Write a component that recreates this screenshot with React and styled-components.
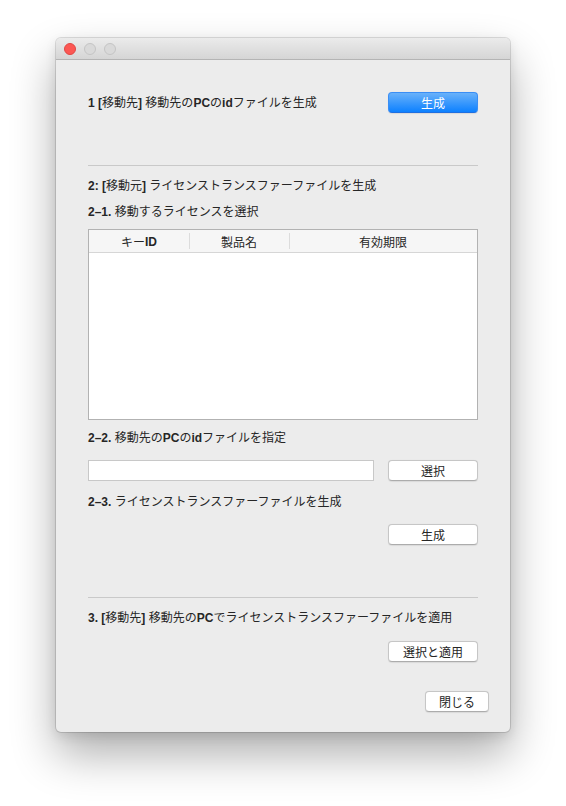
import styled, { createGlobalStyle } from "styled-components";

const Global = createGlobalStyle`
    html, body {
        margin: 0;
        background: #ffffff;
    }
    body {
        font-family: "Liberation Sans", "Noto Sans CJK JP", sans-serif;
        font-size: 12px;
        color: #262626;
    }
`;

const Page = styled.div`
    padding: 38px 0 0 56px;
    height: 768px;
`;

const Window = styled.div`
    width: 454px;
    height: 694px;
    box-sizing: border-box;
    background: #ececec;
    border-radius: 5px;
    display: flex;
    flex-direction: column;
    box-shadow: 0 0 0 1px rgba(0, 0, 0, 0.12), 0 22px 45px rgba(0, 0, 0, 0.32), 0 4px 12px rgba(0, 0, 0, 0.1);
    overflow: hidden;
`;

const TitleBar = styled.div`
    height: 21px;
    flex-shrink: 0;
    background: linear-gradient(#ebebeb, #d5d5d5);
    border-bottom: 1px solid #b4b4b4;
    display: flex;
    align-items: center;
    gap: 8px;
    padding-left: 8px;
`;

const Light = styled.span`
    width: 12px;
    height: 12px;
    box-sizing: border-box;
    border-radius: 50%;
    background: ${props => props.$red ? "#fc5753" : "#d9d9d9"};
    border: 1px solid ${props => props.$red ? "#df4744" : "#c4c4c4"};
`;

const Body = styled.div`
    flex: 1;
    display: flex;
    flex-direction: column;
    padding: 32px 32px 0 32px;
`;

const Row = styled.div`
    display: flex;
    align-items: center;
    justify-content: space-between;
    margin-top: ${props => props.$top || 0}px;
`;

const EndRow = styled.div`
    display: flex;
    justify-content: flex-end;
    margin-top: ${props => props.$top || 0}px;
    margin-right: ${props => props.$right || 0}px;
`;

const Label = styled.div`
    line-height: 16px;
    white-space: nowrap;
    margin-top: ${props => props.$top || 0}px;

    b {
        font-weight: bold;
    }
`;

const Divider = styled.div`
    height: 1px;
    background: #c9c9c9;
    margin-top: ${props => props.$top || 0}px;
`;

const PushButton = styled.button`
    width: ${props => props.$width || 90}px;
    height: 21px;
    box-sizing: border-box;
    padding: 0;
    font-family: inherit;
    font-size: 12px;
    border-radius: 4px;
    color: ${props => props.$primary ? "#ffffff" : "#262626"};
    background: ${props => props.$primary ? "linear-gradient(#69b1fa, #0d81ff)" : "#ffffff"};
    border: 1px solid ${props => props.$primary ? "#3a8ef5" : "#c6c6c6"};
    border-bottom-color: ${props => props.$primary ? "#1f6fe0" : "#acacac"};
    box-shadow: 0 0.5px 1px rgba(0, 0, 0, 0.08);
`;

const Table = styled.div`
    margin-top: 9px;
    height: 191px;
    box-sizing: border-box;
    border: 1px solid #b2b2b2;
    background: #ffffff;
    display: flex;
    flex-direction: column;
`;

const HeaderRow = styled.div`
    height: 22px;
    flex-shrink: 0;
    display: grid;
    grid-template-columns: 100px 100px 1fr;
    background: #f6f6f6;
    border-bottom: 1px solid #d6d6d6;
`;

const HeaderCell = styled.div`
    display: flex;
    align-items: center;
    justify-content: center;
    position: relative;
    padding-top: 1px;

    & + &::before {
        content: "";
        position: absolute;
        left: 0;
        top: 3px;
        bottom: 3px;
        width: 1px;
        background: #dcdcdc;
    }
`;

const FileInput = styled.div`
    width: 286px;
    height: 21px;
    box-sizing: border-box;
    background: #ffffff;
    border: 1px solid #c8c8c8;
`;

const App = () => {
    return (
        <>
            <Global />
            <Page>
                <Window>
                    <TitleBar>
                        <Light $red />
                        <Light />
                        <Light />
                    </TitleBar>
                    <Body>
                        <Row>
                            <Label><b>1 [</b>移動先<b>]</b> 移動先の<b>PC</b>の<b>id</b>ファイルを生成</Label>
                            <PushButton $primary>生成</PushButton>
                        </Row>
                        <Divider $top={52} />
                        <Label $top={12}><b>2: [</b>移動元<b>]</b> ライセンストランスファーファイルを生成</Label>
                        <Label $top={10}><b>2–1.</b> 移動するライセンスを選択</Label>
                        <Table>
                            <HeaderRow>
                                <HeaderCell>キー<b>ID</b></HeaderCell>
                                <HeaderCell>製品名</HeaderCell>
                                <HeaderCell>有効期限</HeaderCell>
                            </HeaderRow>
                        </Table>
                        <Label $top={10}><b>2–2.</b> 移動先の<b>PC</b>の<b>id</b>ファイルを指定</Label>
                        <Row $top={14}>
                            <FileInput />
                            <PushButton>選択</PushButton>
                        </Row>
                        <Label $top={13}><b>2–3.</b> ライセンストランスファーファイルを生成</Label>
                        <EndRow $top={14}>
                            <PushButton>生成</PushButton>
                        </EndRow>
                        <Divider $top={52} />
                        <Label $top={12}><b>3. [</b>移動先<b>]</b> 移動先の<b>PC</b>でライセンストランスファーファイルを適用</Label>
                        <EndRow $top={15}>
                            <PushButton>選択と適用</PushButton>
                        </EndRow>
                        <EndRow $top={29} $right={-11}>
                            <PushButton $width={64}>閉じる</PushButton>
                        </EndRow>
                    </Body>
                </Window>
            </Page>
        </>
    );
};

export default App;
